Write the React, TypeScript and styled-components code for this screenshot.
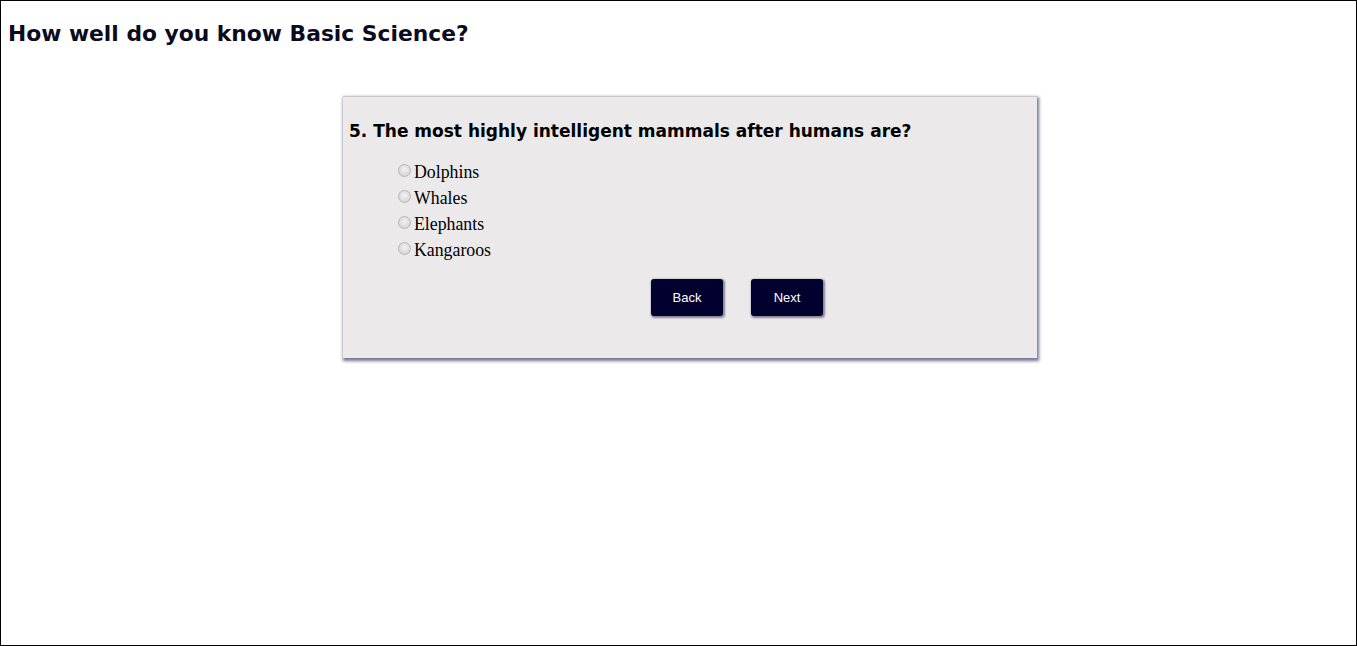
import React from 'react';
import styled, { createGlobalStyle } from 'styled-components';

const GlobalStyle = createGlobalStyle`
  html, body {
    margin: 0;
    padding: 0;
    background: #fff;
  }
`;

const Page = styled.div`
  box-sizing: border-box;
  width: 1357px;
  height: 646px;
  border: 1px solid #000;
  padding: 20px 0 0 7px;
  overflow: hidden;
`;

const Title = styled.h1`
  margin: 0;
  font-family: 'DejaVu Sans', Verdana, sans-serif;
  font-size: 21.8px;
  font-weight: 700;
  color: #0b0b1e;
`;

const Card = styled.section`
  box-sizing: border-box;
  width: 694px;
  height: 262px;
  margin: 50px 0 0 335px;
  padding: 24px 6px 0;
  background: #ebe9ea;
  border-top: 1px solid #c9c9cc;
  box-shadow: 1px 2px 3px 1px rgba(70, 70, 110, 0.75);
`;

const Question = styled.h2`
  margin: 0 0 18px;
  font-family: 'DejaVu Sans', Verdana, sans-serif;
  font-size: 17px;
  font-weight: 700;
  color: #000;
`;

const Options = styled.ul`
  list-style: none;
  margin: 0;
  padding: 0 0 0 49px;
`;

const Option = styled.li`
  display: flex;
  align-items: center;
  height: 26px;
  font-family: 'Liberation Serif', 'Times New Roman', serif;
  font-size: 17.8px;
  color: #000;
`;

const Radio = styled.input`
  appearance: none;
  box-sizing: border-box;
  width: 13px;
  height: 13px;
  margin: -4px 3px 0 0;
  border-radius: 50%;
  border: 1px solid #b5b5b5;
  background: radial-gradient(circle at 50% 40%, #f2f2f2 0%, #dcdcdc 60%, #cfcfcf 100%);
`;

const Actions = styled.div`
  display: flex;
  gap: 28px;
  margin: 16px 0 0 302px;
`;

const Button = styled.button`
  width: 72px;
  height: 37px;
  border: none;
  border-radius: 3px;
  background: #02002e;
  color: #fff;
  font-family: 'Liberation Sans', Arial, sans-serif;
  font-size: 13px;
  box-shadow: 1px 1px 2px 1px rgba(90, 90, 120, 0.7);
  cursor: pointer;
`;

const answers = ['Dolphins', 'Whales', 'Elephants', 'Kangaroos'];

export default function App(): React.ReactElement {
  return (
    <Page>
      <GlobalStyle />
      <Title>How well do you know Basic Science?</Title>
      <Card>
        <Question>5. The most highly intelligent mammals after humans are?</Question>
        <Options>
          {answers.map((a) => (
            <Option key={a}>
              <Radio type="radio" name="q5" value={a} />
              {a}
            </Option>
          ))}
        </Options>
        <Actions>
          <Button>Back</Button>
          <Button>Next</Button>
        </Actions>
      </Card>
    </Page>
  );
}
